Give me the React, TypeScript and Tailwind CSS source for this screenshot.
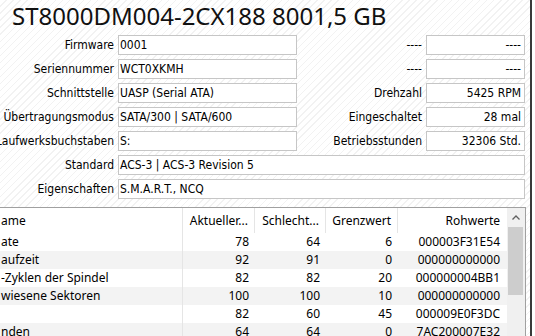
import React from "react";

const lbl = "font-['DejaVu_Sans_Condensed','DejaVu_Sans',sans-serif] text-[12px] text-black";

function Field({ value, right }: { value: string; right?: boolean }) {
  return (
    <div
      className={`h-[20px] bg-white border border-[#c6c6c6] flex items-center ${
        right ? "justify-end pr-[3px]" : "pl-[1px]"
      } ${lbl} whitespace-nowrap overflow-hidden`}
    >
      {value}
    </div>
  );
}

function Row({
  label,
  value,
  rlabel,
  rvalue,
  wide,
}: {
  label: string;
  value: string;
  rlabel?: string;
  rvalue?: string;
  wide?: boolean;
}) {
  return (
    <div className="flex h-[20px] shrink-0 items-center">
      <div className={`w-[114px] shrink-0 flex justify-end whitespace-nowrap ${lbl}`}>{label}</div>
      <div className={wide ? "ml-[4px] w-[407px] shrink-0" : "ml-[4px] w-[179px] shrink-0"}>
        <Field value={value} />
      </div>
      {!wide && (
        <>
          <div className={`w-[125px] shrink-0 text-right whitespace-nowrap ${lbl}`}>{rlabel}</div>
          <div className="ml-[4px] w-[99px] shrink-0">
            <Field value={rvalue || ""} right />
          </div>
        </>
      )}
    </div>
  );
}

const rows = [
  ["ate", "78", "64", "6", "000003F31E54"],
  ["aufzeit", "92", "91", "0", "000000000000"],
  ["-Zyklen der Spindel", "82", "82", "20", "000000004BB1"],
  ["wiesene Sektoren", "100", "100", "10", "000000000000"],
  ["", "82", "60", "45", "000009E0F3DC"],
  ["nden", "64", "64", "0", "7AC200007E32"],
];

const tbl = "font-['Noto_Sans',sans-serif] text-[12px] text-black";

export default function App() {
  return (
    <div className="w-[535px] h-[336px] overflow-hidden bg-white flex">
      <div className="w-[530px] h-full flex flex-col overflow-hidden bg-[image:repeating-linear-gradient(135deg,#ffffff_0px,#ffffff_4px,#f2f2f2_4px,#f2f2f2_5px)]">
        <div className="h-[35px] shrink-0 pl-[12px] text-[24px] leading-[32px] font-['Noto_Sans',sans-serif] text-[#111] whitespace-nowrap">
          ST8000DM004-2CX188 8001,5 GB
        </div>
        <div className="flex flex-col gap-[4px] shrink-0">
          <Row label="Firmware" value="0001" rlabel="----" rvalue="----" />
          <Row label="Seriennummer" value="WCT0XKMH" rlabel="----" rvalue="----" />
          <Row label="Schnittstelle" value="UASP (Serial ATA)" rlabel="Drehzahl" rvalue="5425 RPM" />
          <Row label="Übertragungsmodus" value="SATA/300 | SATA/600" rlabel="Eingeschaltet" rvalue="28 mal" />
          <Row label="Laufwerksbuchstaben" value="S:" rlabel="Betriebsstunden" rvalue="32306 Std." />
          <Row label="Standard" value="ACS-3 | ACS-3 Revision 5" wide />
          <Row label="Eigenschaften" value="S.M.A.R.T., NCQ" wide />
        </div>
        <div className="mt-[8px] w-[526px] h-[140px] shrink-0 flex border-t border-r border-[#a0a0a0] bg-white">
          <div className={`w-[507px] flex flex-col ${tbl}`}>
            <div className="h-[25px] shrink-0 flex items-stretch bg-white">
              <div className="w-[183px] border-r border-[#e5e5e5] flex items-center pl-[1px] whitespace-nowrap">ame</div>
              <div className="w-[72px] border-r border-[#e5e5e5] flex items-center justify-end pr-[6px]">Aktueller...</div>
              <div className="w-[71px] border-r border-[#e5e5e5] flex items-center justify-end pr-[6px]">Schlecht...</div>
              <div className="w-[72px] border-r border-[#e5e5e5] flex items-center justify-end pr-[6px]">Grenzwert</div>
              <div className="w-[109px] flex items-center justify-end pr-[7px]">Rohwerte</div>
            </div>
            {rows.map((r, i) => (
              <div
                key={i}
                className={`h-[18px] shrink-0 flex items-center ${i % 2 === 1 ? "bg-[#f3f3f3]" : "bg-white"}`}
              >
                <div className="w-[183px] h-full border-r border-[#e5e5e5] flex items-center pl-[1px] whitespace-nowrap">
                  {r[0]}
                </div>
                <div className="w-[72px] text-right pr-[6px]">{r[1]}</div>
                <div className="w-[71px] text-right pr-[6px]">{r[2]}</div>
                <div className="w-[72px] text-right pr-[6px]">{r[3]}</div>
                <div className="w-[109px] text-right pr-[7px]">{r[4]}</div>
              </div>
            ))}
          </div>
          <div className="w-[18px] bg-[#f0f0f0] flex flex-col items-center">
            <div className="h-[19px] flex items-center justify-center">
              <svg width="8" height="5" viewBox="0 0 8 5">
                <path d="M0.5 4.5 L4 1 L7.5 4.5" fill="none" stroke="#606060" strokeWidth="1.3" />
              </svg>
            </div>
            <div className="w-[15px] h-[68px] bg-[#cdcdcd] -ml-[1px]" />
          </div>
        </div>
      </div>
      <div className="w-[2px] h-full shrink-0 bg-[#3a3a3a]" />
      <div className="flex-1 bg-white" />
    </div>
  );
}
